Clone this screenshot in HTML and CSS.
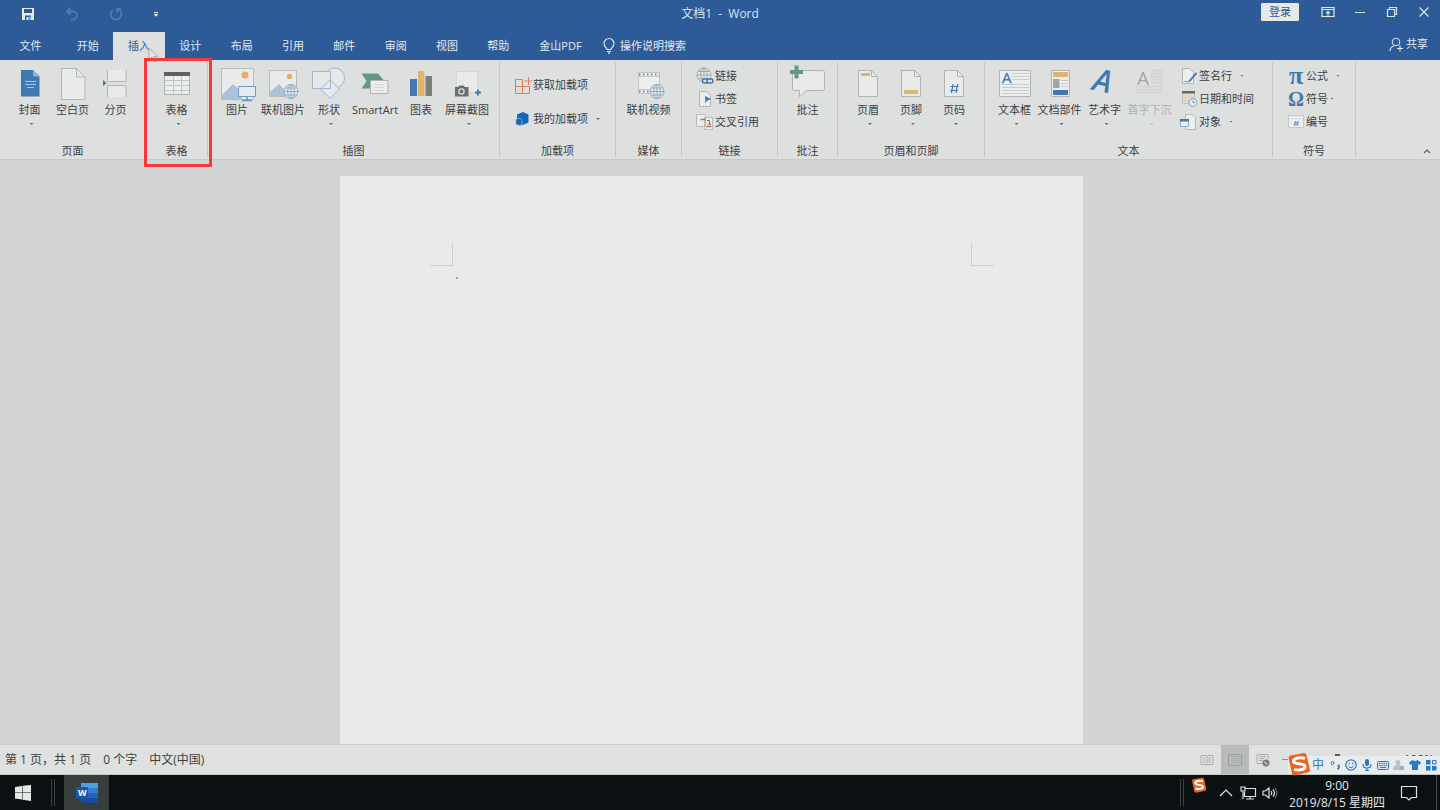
FILE: index.html
```html
<!DOCTYPE html>
<html lang="zh-CN">
<head>
<meta charset="utf-8">
<title>文档1 - Word</title>
<link rel="stylesheet" href="styles.css">
</head>
<body>
<svg class="defs" aria-hidden="true">
  <symbol id="globe" viewBox="0 0 16 16">
    <circle cx="8" cy="8" r="7" fill="#e6e9ea"/>
    <g fill="none" stroke="currentColor"><circle cx="8" cy="8" r="7"/><ellipse cx="8" cy="8" rx="3.3" ry="7"/><path d="M8 1v14M1 8h14M2.3 4.5h11.4M2.3 11.5h11.4"/></g>
  </symbol>
  <symbol id="sheet" viewBox="0 0 36 36">
    <path d="M8.500 4.500h13l6 6v20h-19z" fill="#e9ebea" stroke="#b0b3b3"/><path d="M21.500 4.500v6h6" fill="none" stroke="#b0b3b3"/>
  </symbol>
  <symbol id="sogou" viewBox="0 0 24 24">
    <path d="M1.500 6q0-2 2-2.500L17 1q2 0 2.500 2L23 18q0 2-2 2.500L7.500 23.500q-2 0-2.500-2z" fill="#ec6420"/>
    <path d="M18 6.500C13 4.500 6 6.500 6.500 9.500c.5 3.300 11 1.300 11.500 4.800.4 3.200-6 4.700-11 3" fill="none" stroke="#fff" stroke-width="3"/>
  </symbol>
</svg>

<header class="titlebar">
  <div class="quick">
    <button class="quick-btn" aria-label="保存"><svg width="14" height="14" viewBox="0 0 14 14"><path d="M1 1h12v12H1z" fill="#e4eaf2"/><path d="M3 2h8v4H3zM4 8.500h6V13H4z" fill="#2d5b97"/><path d="M5.500 10h2v3h-2zM8.500 9.500h1V13h-1z" fill="#e4eaf2"/></svg></button>
    <button class="quick-btn faded" aria-label="撤消"><svg width="14" height="14" viewBox="0 0 14 14"><path d="M5.500 1L2 4.500 5.500 8M2 4.500h6a4 4 0 0 1 0 8H6" fill="none" stroke="currentColor" stroke-width="1.800"/></svg></button>
    <button class="quick-btn faded" aria-label="重复"><svg width="14" height="14" viewBox="0 0 14 14"><path d="M4 3a5.300 5.300 0 1 0 6 0M8 6V2h4" fill="none" stroke="currentColor" stroke-width="1.800"/></svg></button>
    <button class="quick-btn narrow" aria-label="自定义快速访问工具栏"><svg width="6" height="6" viewBox="0 0 6 6"><path d="M1 1h4v1H1zM.5 3h5L3 5.700z" fill="#e4eaf2"/></svg></button>
  </div>
  <h1 class="doc-title">文档1 &nbsp;-&nbsp; Word</h1>
  <div class="window-tools">
    <button class="login">登录</button>
    <button class="win-btn" aria-label="功能区显示选项"><svg width="14" height="12" viewBox="0 0 14 12"><path d="M1 1.500h12v9H1zM1 3.500h12M7 10V5.500M5 7.300l2-2 2 2" fill="none" stroke="#dbe4ef" stroke-width="1.200"/></svg></button>
    <button class="win-btn" aria-label="最小化"><svg width="12" height="12" viewBox="0 0 12 12"><path d="M1 6.500h10" stroke="#dbe4ef"/></svg></button>
    <button class="win-btn" aria-label="还原"><svg width="12" height="12" viewBox="0 0 12 12"><path d="M1.500 3.500h7v7h-7zM3.500 3V1.500h7v7H9" fill="none" stroke="#dbe4ef" stroke-width="1.200"/></svg></button>
    <button class="win-btn" aria-label="关闭"><svg width="12" height="12" viewBox="0 0 12 12"><path d="M1.500 1.500l9 9M10.500 1.500l-9 9" stroke="#dbe4ef" stroke-width="1.200"/></svg></button>
  </div>
</header>

<nav class="tabs">
  <button class="tab tab-file">文件</button>
  <div class="tab-set">
    <button class="tab">开始</button>
    <button class="tab active">插入<svg class="pointer" width="12" height="17" viewBox="0 0 12 17"><path d="M1 1v12l3-3 2 5 2-1-2-4.500h4z" fill="#e3e5e5" stroke="#a9aeb2"/></svg></button>
    <button class="tab">设计</button>
    <button class="tab">布局</button>
    <button class="tab">引用</button>
    <button class="tab">邮件</button>
    <button class="tab">审阅</button>
    <button class="tab">视图</button>
    <button class="tab">帮助</button>
  </div>
  <button class="tab tab-pdf">金山PDF</button>
  <button class="tell-me"><svg width="14" height="16" viewBox="0 0 14 16"><path d="M5 11.500c0-2-3-2.500-3-6a5 5 0 0 1 10 0c0 3.500-3 4-3 6zM5 13.500h4M6 15.200h2" fill="none" stroke="#dbe4ef" stroke-width="1.200"/></svg>操作说明搜索</button>
  <button class="share"><svg width="14" height="15" viewBox="0 0 14 15"><circle cx="7" cy="5" r="3.800" fill="none" stroke="#dbe4ef"/><path d="M1 14c0-3 2-4.500 4-5M8 11.500h6M11 8.500v6" fill="none" stroke="#dbe4ef" stroke-width="1.200"/></svg>共享</button>
</nav>

<section class="ribbon" aria-label="插入">
  <div class="group g-pages">
    <div class="items">
      <button class="big"><svg class="ico" viewBox="0 0 36 36"><path d="M9 4h12l6.500 6.500v20H9z" fill="#3f78b2"/><path d="M21 4l6.500 6.500H21z" fill="#8fb3d6"/><path d="M13 15.500h11M13 18.500h11M15 21.500h7" stroke="#a9c4df"/></svg><span>封面</span><i class="caret"></i></button>
      <button class="big"><svg class="ico" viewBox="0 0 36 36"><path d="M6.500 2.500h15l8.500 8.500v22.500H6.500z" fill="#e9ebea" stroke="#b3b6b6"/><path d="M21.500 2.500V11H30" fill="none" stroke="#b3b6b6"/></svg><span>空白页</span></button>
      <button class="big"><svg class="ico" viewBox="0 0 36 36"><path d="M9.500 4v11.500h18.500V4M9.500 31V19.500h18.500V31" fill="#e9ebea" stroke="#b3b6b6"/><path d="M5 14l3.500 3L5 20z" fill="#3f78b2"/></svg><span>分页</span></button>
    </div>
    <h2 class="group-name">页面</h2>
  </div>
  <div class="group g-table">
    <div class="items">
      <button class="big"><svg class="ico" viewBox="0 0 36 36"><path d="M5.500 6.500h25v22h-25z" fill="#eceeed" stroke="#aeb1b1"/><path d="M5 6h26v4H5z" fill="#5d5f60"/><path d="M14.500 10v18M22.500 10v18M6 14.500h24M6 19.500h24M6 24.500h24" stroke="#c3c6c6"/></svg><span>表格</span><i class="caret"></i></button>
    </div>
    <h2 class="group-name">表格</h2>
    <div class="highlight"></div>
  </div>
  <div class="group g-art">
    <div class="items">
      <button class="big"><svg class="ico" viewBox="0 0 36 36"><path d="M2.500 2.500h32v31h-32z" fill="#e9ebea" stroke="#b8bbbb"/><path d="M3 29l11-11 9 9v6H3z" fill="#adc1d8"/><circle cx="26" cy="9" r="3.500" fill="#dfb067"/><path d="M19.500 20.500h17v10h-17z" fill="#e9ebea" stroke="#6f9bc9"/><path d="M28 31v3M23 34.500h10" stroke="#5f92c6" stroke-width="1.500"/></svg><span>图片</span></button>
      <button class="big"><svg class="ico" viewBox="0 0 36 36"><path d="M4.500 4.500h27v26h-27z" fill="#e9ebea" stroke="#b8bbbb"/><path d="M5 26l9-8 9 9v3H5z" fill="#adc1d8"/><circle cx="24.500" cy="10.500" r="2.700" fill="#dfb067"/><use href="#globe" x="18" y="17.500" width="16" height="16" color="#8fabc9"/></svg><span>联机图片</span></button>
      <button class="big"><svg class="ico" viewBox="0 0 36 36"><g fill="#e6e9ea" stroke="#9db6d1"><circle cx="23.500" cy="12" r="10"/><path d="M1.500 5.500h18v17h-18zM19 13.500l9.500 9.500-9.500 9.500L9.500 23z"/></g></svg><span>形状</span><i class="caret"></i></button>
      <button class="big"><svg class="ico" viewBox="0 0 36 36"><path d="M4.500 7.500H21l6.500 7.500-6.500 7.500H4.500l5-7.500z" fill="#639886"/><path d="M13.500 14.500h17.500v13H13.500z" fill="#eceeed" stroke="#b0b3b3"/><path d="M17 18.500h10M17 21.500h10M17 24.500h10" stroke="#d3d6d6"/></svg><span>SmartArt</span></button>
      <button class="big"><svg class="ico" viewBox="0 0 36 36"><path d="M7 13h7v17H7z" fill="#3f78b2"/><path d="M15 5h6.500v25H15z" fill="#dfb56e"/><path d="M22.500 10H29v20h-6.500z" fill="#7b7e7e"/></svg><span>图表</span></button>
      <button class="big"><svg class="ico" viewBox="0 0 36 36"><path d="M7.500 5.500h21v21h-21z" fill="#e9ebea" stroke="#c3c6c6" stroke-dasharray="1.500 1.500"/><path d="M6 21h3l1.500-1.500h4L16 21h3.500v9.500H6z" fill="#6b6e6e"/><circle cx="12.500" cy="25.500" r="2.600" fill="none" stroke="#dee0df" stroke-width="1.300"/><path d="M26 26.500h6M29 23.500v6" stroke="#3f78b2" stroke-width="1.800"/></svg><span>屏幕截图</span><i class="caret"></i></button>
    </div>
    <h2 class="group-name">插图</h2>
  </div>
  <div class="group g-addins">
    <div class="items">
      <div class="stack two">
        <button class="small"><svg class="ico-s" viewBox="0 0 16 16"><path d="M.5 2.500h7v7h-7zM.5 9.500h7v7h-7zM7.500 9.500h7v7h-7zM13.500 0v8M9.500 4h8" fill="none" stroke="#de7d5c"/></svg>获取加载项</button>
        <button class="small"><svg class="ico-s" viewBox="0 0 16 16"><path d="M8 1l5.500 2.500v8L8 14 2 11.500v-8z" fill="#1468b8"/><path d="M1 8.500q3-2.500 6 0V14q-4 1-6-1z" fill="#1468b8" stroke="#7fabd6" stroke-width=".8"/></svg>我的加载项<i class="caret side"></i></button>
      </div>
    </div>
    <h2 class="group-name">加载项</h2>
  </div>
  <div class="group g-media">
    <div class="items">
      <button class="big"><svg class="ico" viewBox="0 0 36 36"><path d="M7 6.500h22v21H7z" fill="#eceeed"/><path d="M8 8.500h21M8 25.500h21" stroke="#7b7e7e" stroke-width="2" stroke-dasharray="1.500 2.500"/><path d="M7 6.500h22M7 10.500h22M7 23.500h22M7 27.500h22M7.500 6v22M28.500 6v22" stroke="#b4b7b7" stroke-width=".7"/><use href="#globe" x="18" y="17.500" width="16" height="16" color="#8fabc9"/></svg><span>联机视频</span></button>
    </div>
    <h2 class="group-name">媒体</h2>
  </div>
  <div class="group g-links">
    <div class="items">
      <div class="stack">
        <button class="small"><svg class="ico-s" viewBox="0 0 16 16"><use href="#globe" x="-1" y="-1" width="16" height="16" color="#a4a8a8"/><g fill="#dee0df" stroke="#3f78b2" stroke-width="1.400"><rect x="5.500" y="11" width="6" height="4" rx="2"/><rect x="10" y="11" width="6" height="4" rx="2"/></g></svg>链接</button>
        <button class="small"><svg class="ico-s" viewBox="0 0 16 16"><path d="M2.500.5h7l4 4v11h-11z" fill="#eceeed" stroke="#b3b6b6"/><path d="M8.500 5v7" stroke="#6b8fb8"/><path d="M9 5.500l5 2.500-5 2.500z" fill="#3f78b2"/></svg>书签</button>
        <button class="small"><svg class="ico-s" viewBox="0 0 16 16"><path d="M-.5.5h9v12h-9zM7.500 3.500h8v12h-8z" fill="#eceeed" stroke="#b9bcbc"/><path d="M3.500 5.500h5M9.500 12.500h5" stroke="#d06a35" stroke-width="1.600"/><path d="M10 6.500h2.500V11M11 9.500l1.500 1.500 1.500-1.500" fill="none" stroke="#6b6e6e"/></svg>交叉引用</button>
      </div>
    </div>
    <h2 class="group-name">链接</h2>
  </div>
  <div class="group g-comment">
    <div class="items">
      <button class="big"><svg class="ico" viewBox="0 0 36 36"><path d="M4.500 4.500h28q2 0 2 2v16q0 2-2 2H16L9.500 31v-6.500h-5q-2 0-2-2v-16q0-2 2-2z" fill="#e9ebea" stroke="#b0b3b3"/><path d="M0 6h13M6.500-.5v13" stroke="#639886" stroke-width="4"/></svg><span>批注</span></button>
    </div>
    <h2 class="group-name">批注</h2>
  </div>
  <div class="group g-header">
    <div class="items">
      <button class="big"><svg class="ico" viewBox="0 0 36 36"><use href="#sheet" width="36" height="36"/><path d="M11 7h9v3h-9z" fill="#dfb56e"/></svg><span>页眉</span><i class="caret"></i></button>
      <button class="big"><svg class="ico" viewBox="0 0 36 36"><use href="#sheet" width="36" height="36"/><path d="M11 24h14v4H11z" fill="#dfb56e"/></svg><span>页脚</span><i class="caret"></i></button>
      <button class="big"><svg class="ico" viewBox="0 0 36 36"><use href="#sheet" width="36" height="36"/><path d="M17 18l-1.500 9M21.500 18L20 27M14.500 20.500h8M14 24.500h8" fill="none" stroke="#3f78b2" stroke-width="1.200"/></svg><span>页码</span><i class="caret"></i></button>
    </div>
    <h2 class="group-name">页眉和页脚</h2>
  </div>
  <div class="group g-text">
    <div class="items">
      <button class="big"><svg class="ico" viewBox="0 0 36 36"><path d="M2.500 4.500h31v26h-31z" fill="#eceeed" stroke="#b0b3b3"/><path d="M15 7.500h17M15 10.500h17M15 13.500h17M5 18.500h27M5 21.500h27M5 24.500h27M5 27.500h27" stroke="#c9cccc"/><text class="letter letter-box" x="5" y="17">A</text></svg><span>文本框</span><i class="caret"></i></button>
      <button class="big"><svg class="ico" viewBox="0 0 36 36"><path d="M9.500 4.500h18v26h-18z" fill="#eceeed" stroke="#b0b3b3"/><path d="M11 6h15v5H11z" fill="#dfb56e"/><path d="M11 13h6.500v9H11z" fill="#a2a5a5"/><path d="M11 24h15v5H11z" fill="#3f78b2"/><path d="M19 14.500h7M19 17.500h7M19 20.500h7" stroke="#c9cccc"/></svg><span>文档部件</span><i class="caret"></i></button>
      <button class="big"><svg class="ico" viewBox="0 0 36 36"><text class="letter letter-art" x="6" y="26" transform="rotate(12 17 18)">A</text></svg><span>艺术字</span><i class="caret"></i></button>
      <button class="big disabled" disabled><svg class="ico" viewBox="0 0 36 36"><path d="M19 4.500h12M19 7.500h12M19 10.500h12M19 13.500h12M19 16.500h12M4 20.500h27M4 23.500h27M4 26.500h27" stroke="#d3d5d5" stroke-width="2"/><text class="letter letter-drop" x="5" y="19">A</text></svg><span>首字下沉</span><i class="caret"></i></button>
      <div class="stack">
        <button class="small"><svg class="ico-s" viewBox="0 0 16 16"><path d="M1.500.5h7l4 4v11h-11z" fill="#eceeed" stroke="#b3b6b6"/><path d="M15 4.500l-6.500 7.500-1.500 2 2.500-1L15.500 6z" fill="#3f78b2" stroke="#3f78b2" stroke-width=".6"/><path d="M3 13.500h4" stroke="#8fabc9"/></svg>签名行<i class="caret side"></i></button>
        <button class="small"><svg class="ico-s" viewBox="0 0 16 16"><path d="M1.500 1.500h12v11h-12z" fill="#e5dcd4" stroke="#c6c3bf"/><path d="M1 0h13v2.500H1z" fill="#66696a"/><path d="M4.500 4v8M7.500 4v8M10.500 4v8M2 6.500h11M2 9.500h11" stroke="#d8cabe" stroke-width=".7"/><circle cx="12" cy="11.500" r="4" fill="#e9ebea" stroke="#8fabc9"/><path d="M12 9v2.500h2" fill="none" stroke="#6f9bc9"/></svg>日期和时间</button>
        <button class="small"><svg class="ico-s" viewBox="0 0 16 16"><path d="M4.500.5h7l3 3v12h-10z" fill="#eceeed" stroke="#b3b6b6"/><path d="M-.5 5.500h8v7h-8z" fill="#eceeed" stroke="#8fabc9"/><path d="M-1 5h9v2.500h-9z" fill="#3f78b2"/></svg>对象<i class="caret side"></i></button>
      </div>
    </div>
    <h2 class="group-name">文本</h2>
  </div>
  <div class="group g-symbol">
    <div class="items">
      <div class="stack">
        <button class="small"><b class="glyph pi">π</b>公式<i class="caret side"></i></button>
        <button class="small"><b class="glyph">Ω</b>符号<i class="caret near"></i></button>
        <button class="small"><svg class="ico-s" viewBox="0 0 16 16"><path d="M.5 1.500h15v12H.5z" fill="#eceeed" stroke="#c6c9c9"/><path d="M2 4.500h12" stroke="#dcdede"/><path d="M7.500 7l-1 5M10 7l-1 5M6 8.500h5M5.500 10.500h5" stroke="#5f92c6" stroke-width=".9"/></svg>编号</button>
      </div>
    </div>
    <h2 class="group-name">符号</h2>
  </div>
  <button class="collapse" aria-label="折叠功能区"><svg width="8" height="6" viewBox="0 0 8 6"><path d="M1 5l3-3 3 3" fill="none" stroke="#5b5e5e" stroke-width="1.200"/></svg></button>
</section>

<main class="workspace">
  <article class="page">
    <div class="margins"><span class="corner left"></span><span class="corner right"></span></div>
    <p class="para"><i class="mark"></i></p>
  </article>
</main>

<footer class="status">
  <span>第 1 页，共 1 页</span>
  <span>0 个字</span>
  <span>中文(中国)</span>
  <div class="views">
    <button class="view" aria-label="阅读视图"><svg width="14" height="12" viewBox="0 0 14 12"><path d="M7 2v9.500M1 1.500h5l1 1 1-1h5v9H8l-1 1-1-1H1zM3 4h2.500M3 6h2.500M3 8h2.500M8.500 4H11M8.500 6H11M8.500 8H11" fill="none" stroke="#adb0b0"/></svg></button>
    <button class="view current" aria-label="页面视图"><svg width="14" height="14" viewBox="0 0 14 14"><path d="M3 3.500h8M3 5.500h8M3 7.500h8M3 9.500h8" stroke="#a9acac"/><path d="M.5 1.500h13v11H.5z" fill="none" stroke="#9b9e9e"/></svg></button>
    <button class="view" aria-label="Web 版式视图"><svg width="14" height="14" viewBox="0 0 14 14"><path d="M12 6V1.500H1v9h6M3 3.500h7M3 5.500h5M3 7.500h4" fill="none" stroke="#adb0b0"/><circle cx="10" cy="10" r="3.500" fill="#7b7e7e"/><path d="M8 9l2 1 1 2" stroke="#dee0df" fill="none"/></svg></button>
    <input class="zoom" type="range" min="10" max="190" value="100" aria-label="显示比例">
    <output class="percent">100%</output>
  </div>
  <div class="ime">
    <svg class="ime-logo" width="24" height="24"><use href="#sogou" width="24" height="24"/></svg>
    <span class="ime-text">中</span>
    <svg width="12" height="12" viewBox="0 0 12 12"><circle cx="3.500" cy="4" r="1.500" fill="none" stroke="#2a78c6"/><path d="M8.500 6.500h1.500v2L8.500 10.500" fill="none" stroke="#2a78c6" stroke-width="1.600"/></svg>
    <svg width="12" height="12" viewBox="0 0 12 12"><circle cx="6" cy="6" r="5.200" fill="none" stroke="#2a78c6" stroke-width="1.200"/><path d="M3.300 7q2.700 3.500 5.400 0M4.200 3.500v2M7.800 3.500v2" fill="none" stroke="#2a78c6"/></svg>
    <svg width="12" height="12" viewBox="0 0 12 12"><rect x="4" y="0" width="4" height="7" rx="2" fill="#2a78c6"/><path d="M2 5q0 4 4 4t4-4M6 9v3M4 11.500h4" fill="none" stroke="#2a78c6" stroke-width="1.200"/></svg>
    <svg width="12" height="12" viewBox="0 0 12 12"><rect x=".5" y="2.500" width="11" height="8" rx="1" fill="#cfe0f1" stroke="#2a78c6"/><path d="M2 4.500h8M2 6.500h8" stroke="#2a78c6" stroke-dasharray="1.500 .8"/><path d="M3 8.500h6" stroke="#2a78c6"/></svg>
    <svg width="12" height="12" viewBox="0 0 12 12"><circle cx="5" cy="3.500" r="2.500" fill="#b4c0d2"/><path d="M0 11q0-5 5-5t5 5z" fill="#b4c0d2"/><path d="M7 7h4v4H7z" fill="#9fadc4"/></svg>
    <svg width="12" height="12" viewBox="0 0 12 12"><path d="M3.500 1q2.500 2 5 0L12 3.500 10.500 6 9 5.300V11H3V5.300L1.500 6 0 3.500z" fill="#2a78c6"/></svg>
    <svg width="12" height="12" viewBox="0 0 12 12"><path d="M1 1h4.500v4.500H1zM1 7h4.500v4.500H1zM7 7h4.500v4.500H7z" fill="#2a78c6"/><path d="M7.500 1.500h3.500v3.500H7.500z" fill="none" stroke="#2a78c6"/></svg>
  </div>
</footer>

<div class="taskbar">
  <button class="start" aria-label="开始"><svg width="18" height="18" viewBox="0 0 18 18"><path d="M1 3l7-1v6.500H1zM8.500 1.800L17 1v7.500H8.500zM1 9h7v6.500L1 14.500zM8.500 9H17v8l-8.500-1.300z" fill="#e6e8e8"/></svg></button>
  <i class="grip"></i>
  <button class="task" aria-label="Word"><svg width="24" height="22" viewBox="0 0 24 22"><path d="M6 1h17v5H6z" fill="#4aa0e0"/><path d="M6 6h17v5H6z" fill="#2f80d0"/><path d="M6 11h17v5H6z" fill="#2264bb"/><path d="M6 16h17v5H6z" fill="#1b4c98"/><rect x="1" y="5" width="12" height="12" rx="1" fill="#1d56a8"/><text class="word-letter" x="3" y="14">W</text></svg></button>
  <div class="tray">
    <i class="grip"></i>
    <svg class="tray-sogou" width="16" height="16"><use href="#sogou" width="16" height="16"/></svg>
    <button class="tray-btn" aria-label="显示隐藏的图标"><svg width="12" height="8" viewBox="0 0 12 8"><path d="M0 7l6-6 6 6" fill="none" stroke="#dfe2e2" stroke-width="1.200"/></svg></button>
    <button class="tray-btn" aria-label="网络"><svg width="16" height="14" viewBox="0 0 16 14"><path d="M5 2.500h10.500v8H4.500V6M10 10.500v3M6 13h8M1 1h4v4H1zM3 5v8" fill="none" stroke="#dfe2e2" stroke-width="1.200"/></svg></button>
    <button class="tray-btn" aria-label="音量"><svg width="16" height="14" viewBox="0 0 16 14"><path d="M1 5h2.500L7 2v10L3.500 9H1zM9 5q1.500 2 0 4M11 3.500q3 3.500 0 7" fill="none" stroke="#dfe2e2" stroke-width="1.200"/><path d="M13 2q4 5 0 10" fill="none" stroke="#7d8283"/></svg></button>
    <time class="clock"><span>9:00</span><span>2019/8/15 星期四</span></time>
    <button class="notify" aria-label="操作中心"><svg width="16" height="16" viewBox="0 0 16 16"><path d="M.5 1.500h15v11h-5L8 15l-2.500-2.500h-5z" fill="none" stroke="#dfe2e2" stroke-width="1.200"/></svg></button>
  </div>
</div>
</body>
</html>
```
FILE: styles.css
```css
* { box-sizing: border-box; }
body {
  margin: 0;
  height: 100vh;
  display: flex;
  flex-direction: column;
  overflow: hidden;
  background: #d3d5d4;
  color: #3c3f3f;
  font-family: "Open Sans", "Noto Sans CJK SC", sans-serif;
  font-size: 11px;
  line-height: 16px;
}
button {
  border: 0;
  padding: 0;
  margin: 0;
  background: none;
  color: inherit;
  font: inherit;
  white-space: nowrap;
}
svg { display: block; flex: none; overflow: visible; }
.defs { position: absolute; width: 0; height: 0; }
h1, h2, p { margin: 0; font-weight: 400; font-size: inherit; }

/* title bar */
.titlebar {
  display: grid;
  grid-template-columns: 1fr auto 1fr;
  height: 32px;
  background: #2d5b97;
  color: #dbe4ef;
}
.quick { display: flex; height: 28px; padding-left: 6px; }
.quick-btn { width: 44px; display: flex; align-items: center; justify-content: center; }
.quick-btn.narrow { width: 36px; }
.quick-btn.faded { color: #5179ad; }
.doc-title { font-size: 12px; line-height: 28px; }
.window-tools { display: flex; justify-content: flex-end; height: 24px; }
.login {
  width: 38px;
  height: 18px;
  margin: 3px 13px 0 0;
  border-radius: 1px;
  background: #e6e9ea;
  color: #2d5b97;
}
.win-btn { width: 32px; display: flex; align-items: center; justify-content: center; }

/* tab strip */
.tabs { display: flex; height: 28px; background: #2d5b97; color: #e4eaf2; }
.tab-file { width: 61px; }
.tab-set { display: grid; grid-template-columns: repeat(9, 1fr); width: 462px; margin-left: 1px; }
.tab-pdf { width: 73px; }
.tab.active { position: relative; background: #dee0df; color: #2d5b97; }
.pointer { position: absolute; left: 35px; top: 15px; z-index: 1; }
.tell-me { display: flex; align-items: center; gap: 4px; margin-left: 5px; }
.share { display: flex; align-items: center; gap: 3px; height: 24px; margin: 0 12px 0 auto; }

/* ribbon */
.ribbon {
  display: flex;
  padding: 2px 0;
  border-bottom: 1px solid #c8cac9;
  background: #dee0df;
}
.group {
  position: relative;
  display: flex;
  flex-direction: column;
  justify-content: space-between;
  height: 95px;
  border-right: 1px solid #c6c8c7;
}
.g-pages { width: 146px; border-right-color: transparent; }
.g-table { width: 62px; }
.g-art { width: 292px; }
.g-addins { width: 116px; }
.g-media { width: 66px; }
.g-links { width: 96px; }
.g-comment { width: 60px; }
.g-header { width: 147px; }
.g-text { width: 288px; }
.g-symbol { width: 83px; }
.items { display: flex; justify-content: center; }
.g-art .items { justify-content: flex-start; padding-left: 6px; }
.g-addins .items,
.g-links .items,
.g-symbol .items { justify-content: flex-start; padding-left: 15px; }
.g-text .items { justify-content: flex-start; padding-left: 7px; }
.g-text .stack { margin-left: 9px; }
.group-name { text-align: center; line-height: 12px; }
.big {
  width: 43px;
  padding-top: 4px;
  display: flex;
  flex-direction: column;
  align-items: center;
}
.g-art .big { width: 46px; }
.g-text .big { width: 45px; }
.ico { width: 36px; height: 36px; }
.caret {
  width: 4px;
  height: 2px;
  margin: 5px 0 0 4px;
  background: #6b6e6e;
  clip-path: polygon(0 0, 100% 0, 50% 100%);
}
.caret.side { margin: 0 0 0 6px; }
.caret.near { margin: 0; }
.disabled { color: #adb0b0; }
.disabled .caret { background: #b9bcbc; }
.stack { display: flex; flex-direction: column; padding-top: 2px; }
.stack.two { padding-top: 6px; }
.small { display: flex; align-items: center; gap: 2px; height: 23px; }
.two .small { height: 34px; }
.ico-s { width: 16px; height: 16px; }
.glyph {
  width: 16px;
  color: #3f78b2;
  font-family: "Liberation Serif", serif;
  font-size: 20px;
  text-align: center;
}
.glyph.pi { font-size: 26px; }
.letter { font-family: "Open Sans", sans-serif; fill: #3f78b2; font-weight: 600; }
.letter-box { font-size: 15px; font-weight: 400; stroke: #3f78b2; stroke-width: 0.3px; }
.letter-art { font-size: 31px; font-style: italic; }
.letter-drop { font-size: 19px; font-weight: 400; fill: #a2a5a5; }
.highlight {
  position: absolute;
  inset: -4px -5px -10px -2px;
  border: 3px solid #fb3838;
  z-index: 2;
}
.collapse { align-self: flex-end; margin: 0 9px 3px auto; }

/* document area */
.workspace { flex: 1; min-height: 0; display: flex; justify-content: center; padding: 16px 17px 0 0; }
.page { width: 743px; padding: 67px 89px 0 90px; background: #e9ebea; }
.margins { display: flex; justify-content: space-between; }
.corner { width: 23px; height: 23px; border: 0 solid #cbcecd; border-bottom-width: 1px; }
.corner.left { border-right-width: 1px; }
.corner.right { border-left-width: 1px; }
.para { padding: 11px 26px; }
.mark { display: block; width: 2px; height: 2px; background: #a2a5a5; }

/* status bar */
.status {
  position: relative;
  display: flex;
  align-items: center;
  gap: 12px;
  height: 31px;
  padding-left: 5px;
  border-top: 1px solid #cbcdcc;
  border-bottom: 1px solid #c3c6c6;
  background: #dfe1e0;
  font-size: 12px;
}
.views { display: flex; align-items: center; height: 100%; margin-left: auto; padding-right: 6px; }
.view { width: 28px; height: 100%; display: flex; align-items: center; justify-content: center; }
.view.current { background: #b9bbba; }
.zoom { appearance: none; width: 110px; height: 11px; margin: 0 11px 0 5px; background: linear-gradient(#8d9090, #8d9090) center / 100% 1px no-repeat; }
.zoom::-webkit-slider-thumb { appearance: none; width: 5px; height: 11px; background: #5b5e5e; }
.ime {
  position: absolute;
  right: 0;
  bottom: 0;
  display: flex;
  align-items: center;
  gap: 4px;
  height: 18px;
  padding: 0 3px 0 24px;
  background: #e9ecef;
}
.ime-logo { position: absolute; left: -1px; top: -4px; }
.ime-text { color: #2a78c6; line-height: 18px; margin-right: 1px; }

/* task bar */
.taskbar { display: flex; height: 35px; background: #0b1113; color: #e6e8e8; }
.start { width: 45px; display: flex; align-items: center; justify-content: center; }
.grip { width: 4px; margin: 4px 0; border: solid #3b4142; border-width: 0 1px; }
.start + .grip { margin-left: 6px; }
.task { width: 45px; margin-left: 9px; display: flex; align-items: center; justify-content: center; background: #383d3e; }
.word-letter { font-family: "Open Sans", sans-serif; font-size: 9px; font-weight: 700; fill: #fff; }
.tray { display: flex; align-items: center; margin-left: auto; border-right: 1px solid #4a5051; margin-right: 3px; }
.tray .grip { align-self: stretch; }
.tray-sogou { margin: 0 8px 16px 7px; }
.tray-btn { width: 22px; display: flex; align-items: center; justify-content: center; }
.clock { display: flex; flex-direction: column; align-items: center; margin: 2px 16px 0 8px; font-size: 12px; line-height: 17px; }
.notify { margin-right: 19px; }
```
